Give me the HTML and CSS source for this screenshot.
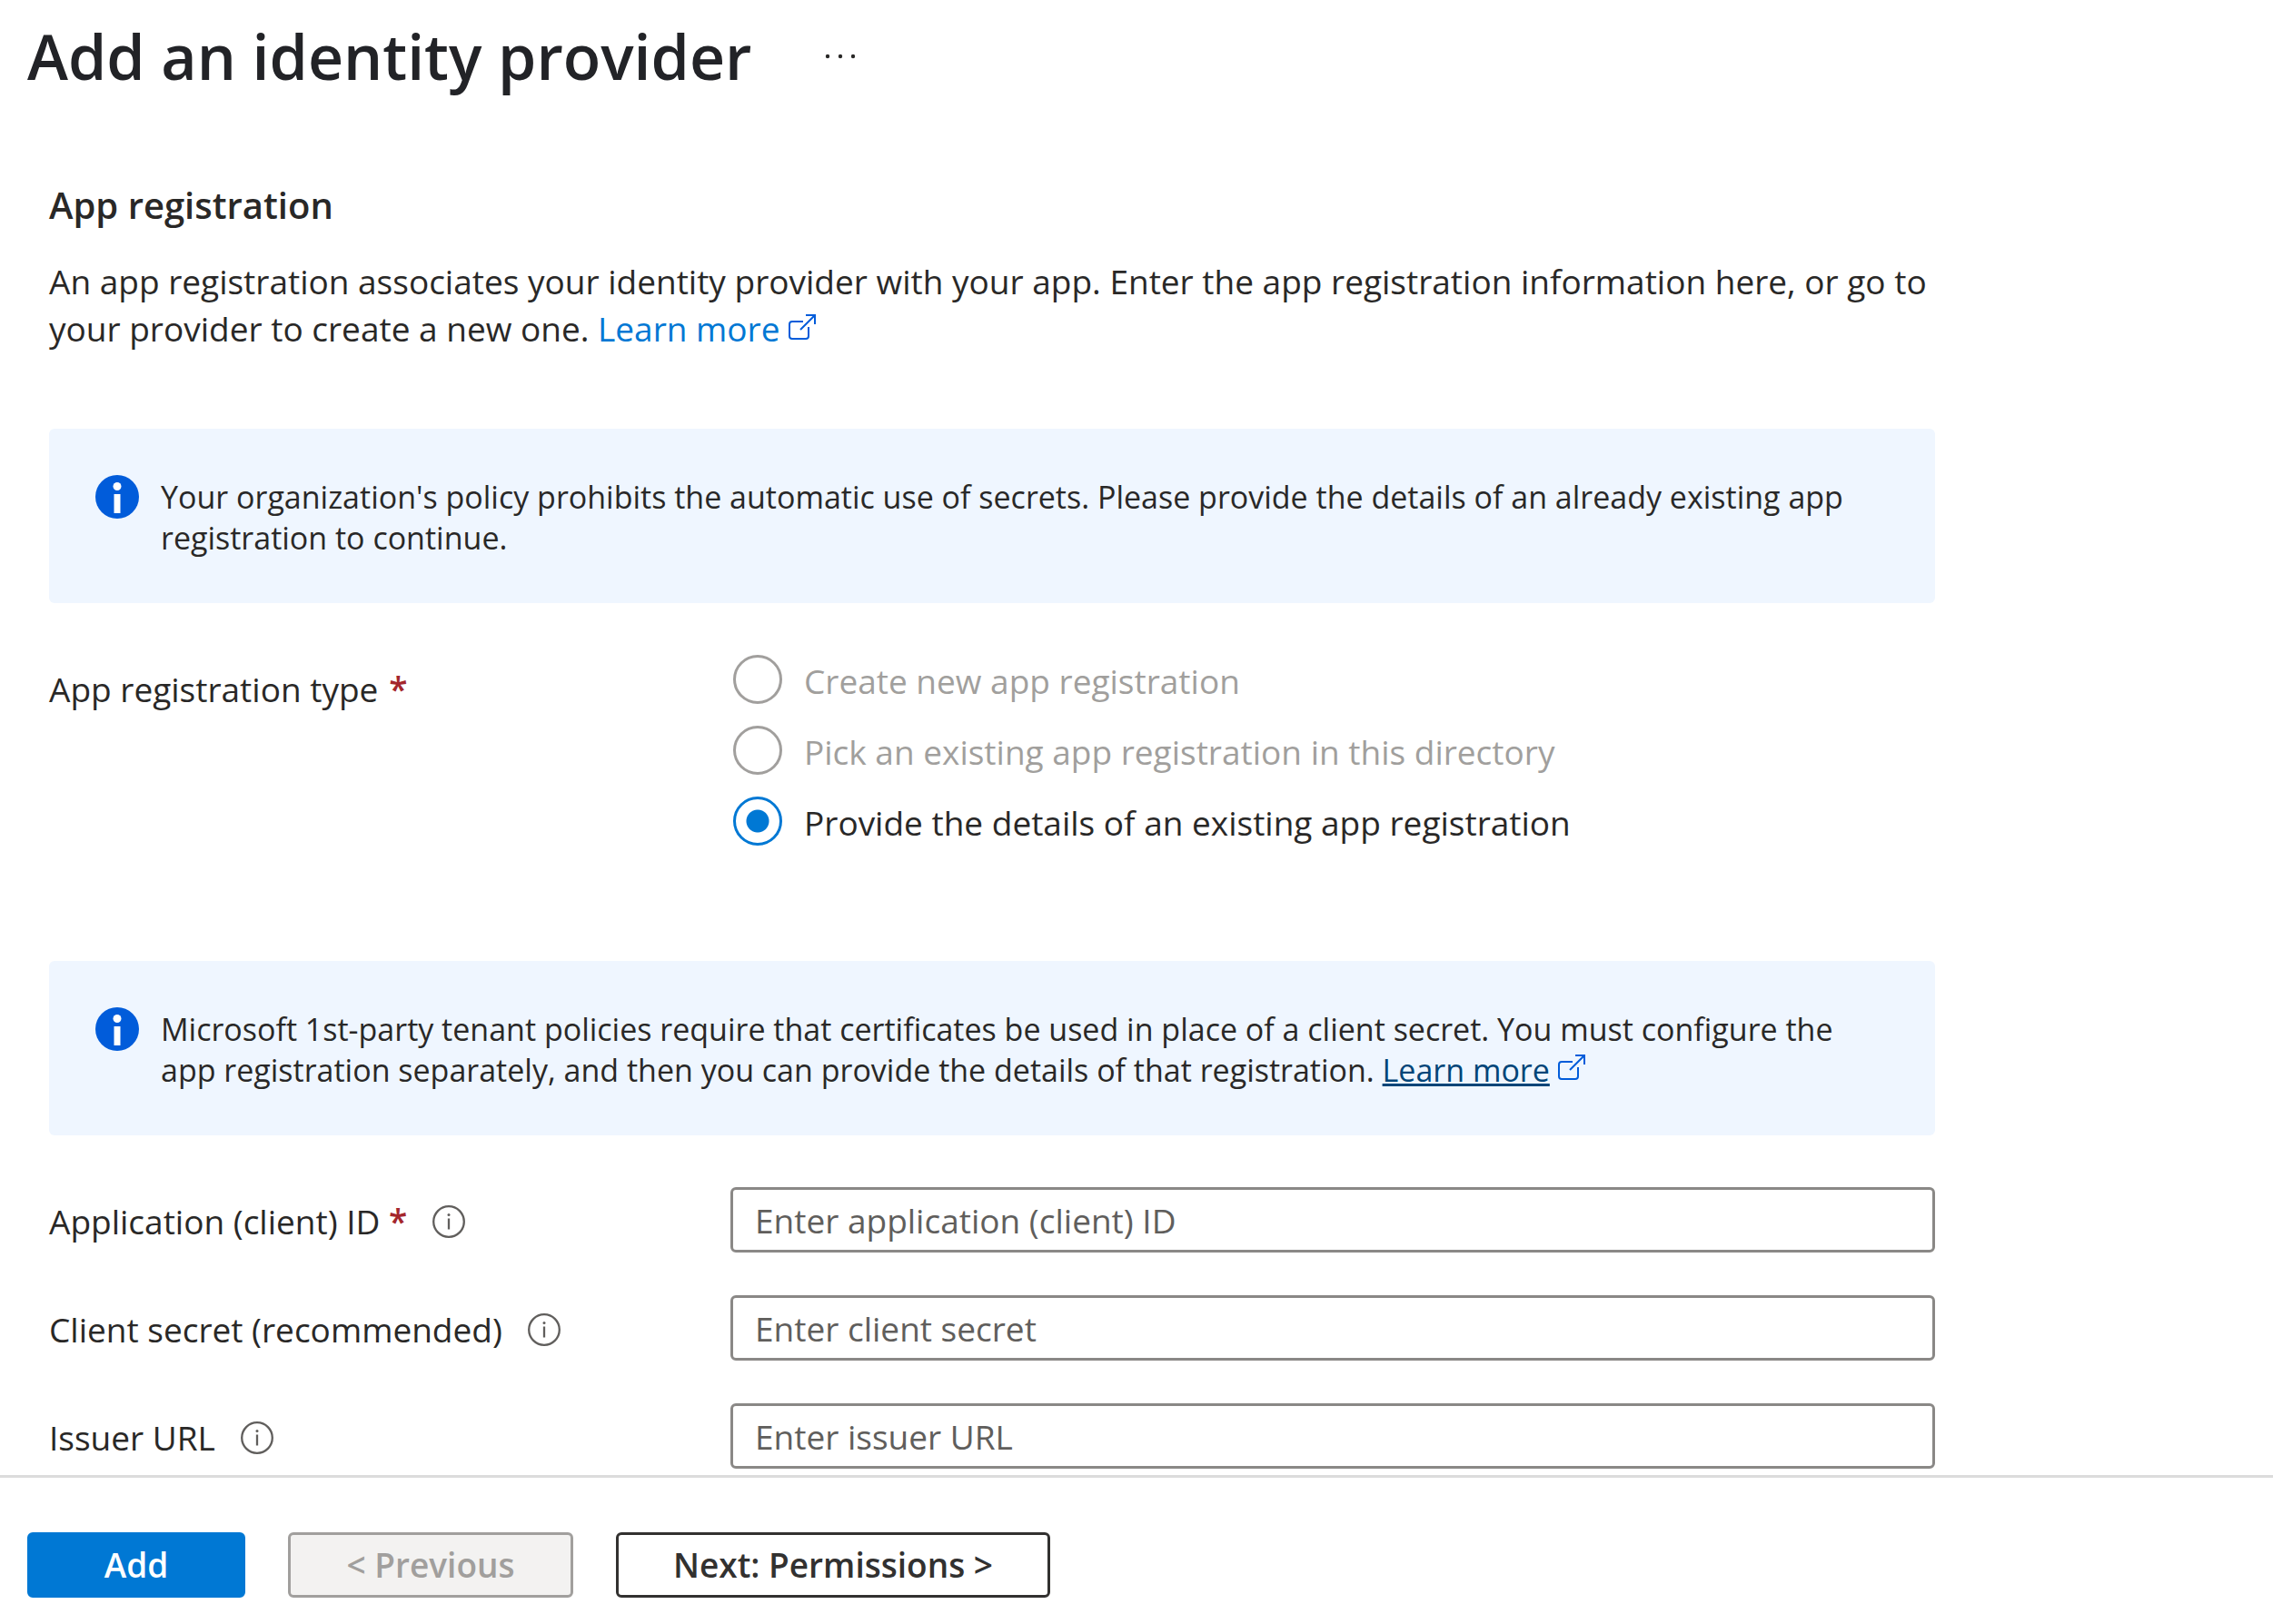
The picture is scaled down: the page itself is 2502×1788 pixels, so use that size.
FILE: index.html
```html
<!DOCTYPE html>
<html lang="en">
<head>
<meta charset="utf-8">
<title>Add an identity provider</title>
<link rel="stylesheet" href="styles.css">
</head>
<body>
<svg class="symbols">
  <symbol id="external" viewBox="0 0 30 30">
    <path d="M16 8H4Q1 8 1 11V24Q1 27 4 27H19Q22 27 22 24V14M13 17L28.500 1.500M19 1H29V11" fill="none" stroke="currentColor" stroke-width="2"/>
  </symbol>
  <symbol id="info-filled" viewBox="0 0 48 48">
    <circle cx="24" cy="24" r="24" fill="#015cda"/>
    <circle cx="24" cy="12.500" r="4.500" fill="#fff"/>
    <path d="M20.500 21h7v21h-7z" fill="#fff"/>
  </symbol>
  <symbol id="info-outline" viewBox="0 0 36 36">
    <circle cx="18" cy="18" r="16.800" fill="none" stroke="currentColor" stroke-width="2.300"/>
    <circle cx="18" cy="10.500" r="1.500" fill="currentColor"/>
    <path d="M18 14.500V26.500" stroke="currentColor" stroke-width="2.300"/>
  </symbol>
</svg>
<header class="page-header">
  <h1>Add an identity provider</h1>
  <button class="more" type="button" aria-label="More options">
    <svg viewBox="0 0 36 8"><circle cx="4" cy="4" r="2.200"/><circle cx="18" cy="4" r="2.200"/><circle cx="32" cy="4" r="2.200"/></svg>
  </button>
</header>
<main class="content">
  <h2>App registration</h2>
  <p class="intro">An app registration associates your identity provider with your app. Enter the app registration information here, or go to<br>your provider to create a new one. <a class="link" href="#">Learn more <svg class="external"><use href="#external"/></svg></a></p>

  <div class="banner">
    <svg class="banner-icon"><use href="#info-filled"/></svg>
    <p>Your organization's policy prohibits the automatic use of secrets. Please provide the details of an already existing app<br>registration to continue.</p>
  </div>

  <fieldset class="row types" aria-labelledby="type-label">
    <div class="label" id="type-label">App registration type <span class="required">*</span></div>
    <div class="options">
      <label class="option disabled"><input type="radio" name="type" disabled>Create new app registration</label>
      <label class="option disabled"><input type="radio" name="type" disabled>Pick an existing app registration in this directory</label>
      <label class="option"><input type="radio" name="type" checked>Provide the details of an existing app registration</label>
    </div>
  </fieldset>

  <div class="banner">
    <svg class="banner-icon"><use href="#info-filled"/></svg>
    <p>Microsoft 1st-party tenant policies require that certificates be used in place of a client secret. You must configure the<br>app registration separately, and then you can provide the details of that registration. <a class="banner-link" href="#"><span>Learn more</span> <svg class="external"><use href="#external"/></svg></a></p>
  </div>

  <div class="fields">
    <div class="row">
      <div class="label"><label for="client-id">Application (client) ID <span class="required">*</span></label><svg class="hint"><use href="#info-outline"/></svg></div>
      <input class="text" id="client-id" type="text" placeholder="Enter application (client) ID">
    </div>
    <div class="row">
      <div class="label"><label for="secret">Client secret (recommended)</label><svg class="hint"><use href="#info-outline"/></svg></div>
      <input class="text" id="secret" type="text" placeholder="Enter client secret">
    </div>
    <div class="row">
      <div class="label"><label for="issuer">Issuer URL</label><svg class="hint"><use href="#info-outline"/></svg></div>
      <input class="text" id="issuer" type="text" placeholder="Enter issuer URL">
    </div>
  </div>
</main>
<footer class="actions">
  <button class="button primary" type="button">Add</button>
  <button class="button previous" type="button" disabled>&lt; Previous</button>
  <button class="button next" type="button">Next: Permissions &gt;</button>
</footer>
</body>
</html>
```

FILE: styles.css
```css
* {
  box-sizing: border-box;
}

body {
  display: flex;
  flex-direction: column;
  min-height: 100vh;
  margin: 0;
  background: #fff;
  color: #292827;
  font: 37px/52px "Open Sans", sans-serif;
}

h1,
h2,
p {
  margin: 0;
}

.symbols {
  display: none;
}

.page-header {
  display: flex;
  align-items: center;
  gap: 80px;
  padding: 14px 30px 0;
}

h1 {
  color: #222327;
  font-size: 68px;
  font-weight: 600;
  line-height: 96px;
}

.more {
  display: flex;
  padding: 0;
  border: 0;
  background: none;
}

.more svg {
  width: 36px;
  height: 8px;
  fill: #292827;
}

.content {
  flex: 1;
  max-width: 2184px;
  padding: 90px 54px 7px;
}

h2 {
  font-size: 40px;
  font-weight: 600;
  line-height: 52px;
}

.intro {
  margin: 32px 0 84px;
}

.link {
  color: #0078d4;
  text-decoration: none;
}

.external {
  width: 30px;
  height: 30px;
  color: #015cda;
}

.banner {
  display: flex;
  align-items: flex-start;
  gap: 24px;
  padding: 51px 51px 49px;
  border-radius: 6px;
  background: #eff6ff;
  font-size: 34px;
  line-height: 45px;
}

.banner p {
  padding-top: 2px;
}

.banner-icon {
  flex: none;
  width: 48px;
  height: 48px;
}

.banner-link {
  color: #004578;
  text-decoration: none;
}

.banner-link span {
  text-decoration: underline;
  text-decoration-thickness: 3px;
}

.row {
  display: grid;
  grid-template-columns: 750px 1fr;
}

.types {
  margin: 57px 0 127px;
  padding: 0;
  border: 0;
}

.label {
  display: flex;
  align-items: center;
  gap: 12px;
  padding-top: 4px;
}

.types .label {
  align-self: start;
  margin-top: 8px;
}

.required {
  color: #a4262c;
  font-weight: 600;
}

.hint {
  width: 36px;
  height: 36px;
  margin-left: 16px;
  color: #605e5c;
}

.options {
  display: grid;
  gap: 24px;
  padding-left: 3px;
}

.option {
  display: flex;
  gap: 24px;
  height: 54px;
  line-height: 58px;
}

.disabled {
  color: #a19f9d;
}

.option input {
  width: 54px;
  height: 54px;
  margin: 0;
  border: 3px solid #a19f9d;
  border-radius: 50%;
  appearance: none;
}

.option input:checked {
  border-color: #0078d4;
  background: radial-gradient(circle, #0078d4 12px, transparent 13px);
}

.fields {
  display: grid;
  gap: 47px;
  margin-top: 57px;
}

.text {
  width: 100%;
  height: 72px;
  padding: 0 24px;
  border: 3px solid #8a8886;
  border-radius: 6px;
  background: #fff;
  color: #292827;
  font: inherit;
}

.text::placeholder {
  color: #605e5c;
  opacity: 1;
}

.actions {
  display: flex;
  gap: 47px;
  padding: 60px 30px 29px;
  border-top: 3px solid #dcdcdc;
}

.button {
  height: 72px;
  padding: 0 60px;
  border: 3px solid #323130;
  border-radius: 6px;
  background: #fff;
  color: #323130;
  font: inherit;
  font-weight: 600;
}

.primary {
  min-width: 240px;
  border-color: #0078d4;
  background: #0078d4;
  color: #fff;
}

.previous {
  min-width: 314px;
  border-color: #a19f9d;
  background: #f3f2f1;
  color: #a19f9d;
}
```
